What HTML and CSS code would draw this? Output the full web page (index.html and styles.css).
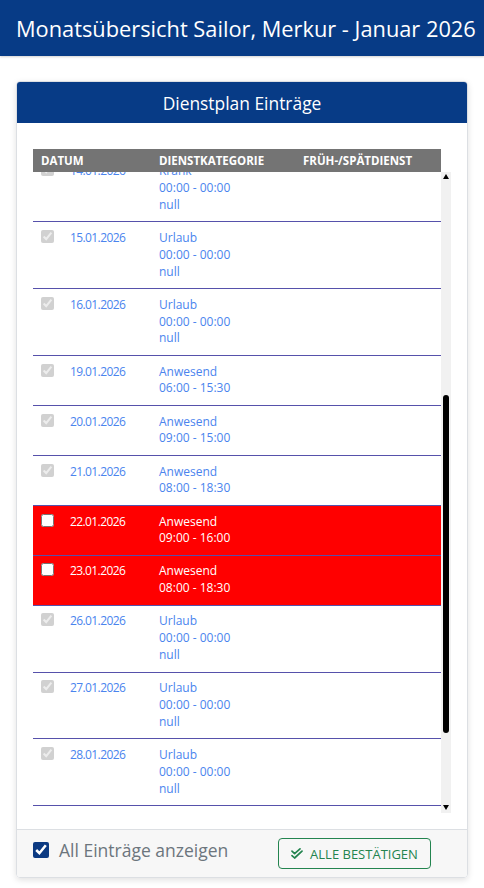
FILE: index.html
```html
<!DOCTYPE html>
<html lang="de">
<head>
  <meta charset="UTF-8">
  <title>Monatsübersicht</title>
  <meta name="viewport" content="width=device-width, initial-scale=1.0">
  <link rel="stylesheet" href="styles.css">
</head>
<body>

<header class="topbar">
  <h1>Monatsübersicht Sailor, Merkur - Januar 2026</h1>
</header>

<main class="page">
  <section class="card">
    <div class="card-header">Dienstplan Einträge</div>
    <div class="card-body">
      <div class="table-head">
        <div></div>
        <div>Datum</div>
        <div>Dienstkategorie</div>
        <div>Früh-/Spätdienst</div>
      </div>
      <div class="table-scroll">
        <div class="table-rows">
          <div class="table-row first">
            <div><input type="checkbox" checked disabled></div>
            <div class="date">14.01.2026</div>
            <div>Krank<br>00:00 - 00:00<br>null</div>
            <div></div>
          </div>
          <div class="table-row">
            <div><input type="checkbox" checked disabled></div>
            <div class="date">15.01.2026</div>
            <div>Urlaub<br>00:00 - 00:00<br>null</div>
            <div></div>
          </div>
          <div class="table-row">
            <div><input type="checkbox" checked disabled></div>
            <div class="date">16.01.2026</div>
            <div>Urlaub<br>00:00 - 00:00<br>null</div>
            <div></div>
          </div>
          <div class="table-row">
            <div><input type="checkbox" checked disabled></div>
            <div class="date">19.01.2026</div>
            <div>Anwesend<br>06:00 - 15:30</div>
            <div></div>
          </div>
          <div class="table-row">
            <div><input type="checkbox" checked disabled></div>
            <div class="date">20.01.2026</div>
            <div>Anwesend<br>09:00 - 15:00</div>
            <div></div>
          </div>
          <div class="table-row">
            <div><input type="checkbox" checked disabled></div>
            <div class="date">21.01.2026</div>
            <div>Anwesend<br>08:00 - 18:30</div>
            <div></div>
          </div>
          <div class="table-row open">
            <div><input type="checkbox"></div>
            <div class="date">22.01.2026</div>
            <div>Anwesend<br>09:00 - 16:00</div>
            <div></div>
          </div>
          <div class="table-row open">
            <div><input type="checkbox"></div>
            <div class="date">23.01.2026</div>
            <div>Anwesend<br>08:00 - 18:30</div>
            <div></div>
          </div>
          <div class="table-row">
            <div><input type="checkbox" checked disabled></div>
            <div class="date">26.01.2026</div>
            <div>Urlaub<br>00:00 - 00:00<br>null</div>
            <div></div>
          </div>
          <div class="table-row">
            <div><input type="checkbox" checked disabled></div>
            <div class="date">27.01.2026</div>
            <div>Urlaub<br>00:00 - 00:00<br>null</div>
            <div></div>
          </div>
          <div class="table-row">
            <div><input type="checkbox" checked disabled></div>
            <div class="date">28.01.2026</div>
            <div>Urlaub<br>00:00 - 00:00<br>null</div>
            <div></div>
          </div>
          <div class="table-row">
            <div><input type="checkbox" checked disabled></div>
            <div class="date">29.01.2026</div>
            <div>Anwesend<br>08:00 - 16:30</div>
            <div></div>
          </div>
        </div>
        <div class="scrollbar">
          <span class="arrow up"></span>
          <span class="thumb"></span>
          <span class="arrow down"></span>
        </div>
      </div>
    </div>
    <div class="card-footer">
      <label class="show-all">
        <input type="checkbox" checked>
        <span>All Einträge anzeigen</span>
      </label>
      <div class="footer-action">
        <button class="btn-confirm">
          <svg width="12" height="12" viewBox="0 0 12 12" fill="none" stroke="currentColor" stroke-width="1.7" stroke-linecap="round" stroke-linejoin="round">
            <path d="M1 3.2 L3.6 5.6 L9 0.9"/>
            <path d="M1 7.6 L3.6 10 L11 3.2"/>
          </svg>
          Alle Bestätigen
        </button>
      </div>
    </div>
  </section>
</main>

</body>
</html>
```

FILE: styles.css
```css
:root {
  --navy: #073b86;
  --row-text: #4a84ee;
  --row-line: #5651ab;
  --head-gray: #747474;
  --border-color: #dcdfe3;
  --green: #23844f;
}
body {
  margin: 0;
  background: #ffffff;
  font-family: "Open Sans", sans-serif;
  color: #333;
}
.topbar {
  background: var(--navy);
  height: 56px;
  box-shadow: 0 1px 2px rgba(0, 0, 0, 0.18);
  display: flex;
  align-items: center;
  padding: 0 16px;
}
h1 {
  margin: 0;
  color: #fff;
  font-size: 21.8px;
  font-weight: 500;
  white-space: nowrap;
}
.page {
  padding: 25px 16px 11px;
}
.card {
  border: 1px solid var(--border-color);
  border-radius: 4px;
  box-shadow: 0 2px 6px rgba(0, 0, 0, 0.12);
  overflow: hidden;
}
.card-header {
  background: var(--navy);
  color: #fff;
  height: 41px;
  display: flex;
  align-items: center;
  justify-content: center;
  font-size: 17.4px;
}
.card-body {
  padding: 26px 16px 16px;
  background: #fff;
}
.table-head {
  display: grid;
  grid-template-columns: 8px 118px 144px 1fr;
  height: 23px;
  align-items: center;
  background: var(--head-gray);
  color: #fff;
  font-size: 11.5px;
  font-weight: 700;
  text-transform: uppercase;
  margin-right: 10px;
}
.table-scroll {
  display: flex;
  height: 641px;
}
.table-rows {
  flex: 1;
  overflow: hidden;
}
.table-row {
  display: grid;
  grid-template-columns: 29px 89px 144px 1fr;
  padding: 7.7px 0 7.7px 8px;
  border-bottom: 1px solid var(--row-line);
  color: var(--row-text);
  font-size: 12px;
  line-height: 16.8px;
}
.table-row .date {
  letter-spacing: -0.6px;
}
.table-row.first {
  margin-top: -16.4px;
}
.table-row.open {
  background: #ff0000;
  color: #fff;
}
.table-row input {
  margin: 0;
  width: 13px;
  height: 13px;
  display: block;
}
.scrollbar {
  width: 10px;
  background: #f1f1f1;
  display: flex;
  flex-direction: column;
  align-items: center;
}
.arrow {
  width: 0;
  height: 0;
  border-left: 3px solid transparent;
  border-right: 3px solid transparent;
}
.arrow.up {
  margin-top: 2px;
  border-bottom: 5px solid #000;
}
.arrow.down {
  margin-top: auto;
  margin-bottom: 3px;
  border-top: 5px solid #000;
}
.thumb {
  width: 6px;
  height: 338px;
  margin-top: 216px;
  background: #000;
  border-radius: 3px;
}
.card-footer {
  display: grid;
  grid-template-columns: 1fr 1fr;
  padding: 8px 0;
  background: #f7f7f7;
  border-top: 1px solid var(--border-color);
  align-items: start;
}
.show-all {
  display: flex;
  align-items: center;
  gap: 10px;
  padding-left: 16px;
  height: 24px;
  color: #6c757d;
  font-size: 17.5px;
  white-space: nowrap;
}
.show-all input {
  margin: 0;
  width: 16px;
  height: 16px;
  flex: none;
  accent-color: #0c3a82;
}
.footer-action {
  display: flex;
  justify-content: center;
}
.btn-confirm {
  display: flex;
  align-items: center;
  gap: 7px;
  height: 31px;
  padding: 0 12px;
  border: 1px solid var(--green);
  border-radius: 4px;
  background: transparent;
  color: var(--green);
  font-family: "Open Sans", sans-serif;
  font-size: 13px;
  text-transform: uppercase;
}
```
